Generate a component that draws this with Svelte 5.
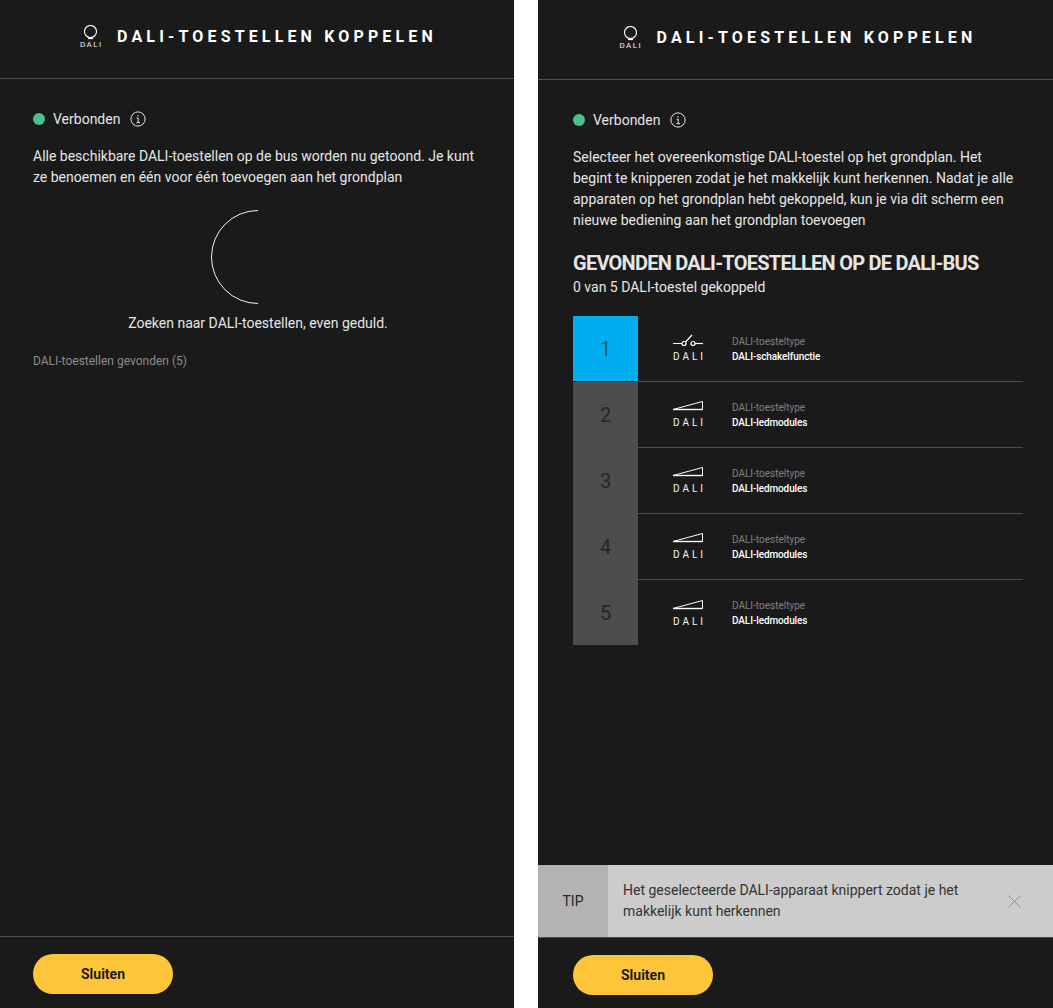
<script>
  const devices = [
    { nr: 1, type: "switch", name: "DALI-schakelfunctie" },
    { nr: 2, type: "led", name: "DALI-ledmodules" },
    { nr: 3, type: "led", name: "DALI-ledmodules" },
    { nr: 4, type: "led", name: "DALI-ledmodules" },
    { nr: 5, type: "led", name: "DALI-ledmodules" },
  ];
</script>

{#snippet header()}
  <header class="head">
    <span class="logo">
      <svg width="15" height="16" viewBox="0 0 15 16" fill="none" stroke="#fff">
        <circle cx="7.500" cy="6.500" r="6" stroke-width="1.100" />
        <path d="M5 13.500h5" stroke-width="1.200" />
      </svg>
      <span class="logo-text">DALI</span>
    </span>
    <h1>DALI-TOESTELLEN KOPPELEN</h1>
  </header>
{/snippet}

{#snippet status()}
  <div class="status">
    <span class="dot"></span>
    <span>Verbonden</span>
    <svg class="info" width="16" height="16" viewBox="0 0 16 16" fill="none" stroke="#e6e6e6">
      <circle cx="8" cy="8" r="7.100" stroke-width="1" />
      <path d="M6.600 7.100H8.200V11.600M6.400 11.600H10" stroke-width="1" />
      <path d="M7.400 4.200h1.200v1.300H7.400z" fill="#e6e6e6" stroke="none" />
    </svg>
  </div>
{/snippet}

<div class="page">
  <section class="panel">
    {@render header()}
    <div class="content">
      {@render status()}
      <p class="intro">Alle beschikbare DALI-toestellen op de bus worden nu getoond. Je kunt ze benoemen en één voor één toevoegen aan het grondplan</p>
      <div class="spinner">
        <svg width="94" height="94" viewBox="0 0 94 94" fill="none" stroke="#f2f2f2">
          <path d="M47 .5A46.500 46.500 0 0 0 47 93.500" stroke-width="1" />
        </svg>
        <div class="searching">Zoeken naar DALI-toestellen, even geduld.</div>
      </div>
      <div class="found-link">DALI-toestellen gevonden (5)</div>
    </div>
    <div class="rule"></div>
    <div class="foot">
      <button class="close">Sluiten</button>
    </div>
  </section>

  <section class="panel shifted">
    {@render header()}
    <div class="content">
      {@render status()}
      <p class="intro">Selecteer het overeenkomstige DALI-toestel op het grondplan. Het begint te knipperen zodat je het makkelijk kunt herkennen. Nadat je alle apparaten op het grondplan hebt gekoppeld, kun je via dit scherm een nieuwe bediening aan het grondplan toevoegen</p>
      <h2>GEVONDEN DALI-TOESTELLEN OP DE DALI-BUS</h2>
      <div class="count">0 van 5 DALI-toestel gekoppeld</div>
      <ul class="devices">
        {#each devices as d, i}
          <li class="device">
            <div class="nr" class:active={i === 0}>{d.nr}</div>
            <div class="row">
              <div class="icon">
                {#if d.type === "switch"}
                  <svg width="32" height="13" viewBox="0 0 32 13" fill="none" stroke="#fff" stroke-width="1.200">
                    <path d="M1 9.500H10M13.500 8L20 1" />
                    <circle cx="12" cy="9.500" r="2" fill="#1a1a1a" />
                    <circle cx="21" cy="9.500" r="2" />
                    <path d="M23 9.500H31" />
                  </svg>
                {:else}
                  <svg width="32" height="13" viewBox="0 0 32 13" fill="none" stroke="#fff">
                    <path d="M1 9.500L30.500 1.500V9.500Z" stroke-width="1" />
                    <path d="M1 9.500H30.500" stroke-width="1.400" />
                  </svg>
                {/if}
                <span class="icon-text">DALI</span>
              </div>
              <div class="labels">
                <div class="type">DALI-toesteltype</div>
                <div class="name">{d.name}</div>
              </div>
            </div>
          </li>
        {/each}
      </ul>
    </div>
    <div class="tip">
      <div class="tip-label">TIP</div>
      <div class="tip-text">Het geselecteerde DALI-apparaat knippert zodat je het makkelijk kunt herkennen</div>
      <svg class="tip-close" width="13" height="13" viewBox="0 0 13 13" stroke="#8c8c8c" stroke-width="1">
        <path d="M.5 .5L12.500 12.500M12.500 .5L.5 12.500" />
      </svg>
    </div>
    <div class="foot">
      <button class="close">Sluiten</button>
    </div>
  </section>
</div>

<style>
  :global(body) {
    background: #fff;
    font-family: Roboto, "Liberation Sans", sans-serif;
  }
  .page {
    display: flex;
    gap: 24px;
    height: 1008px;
  }
  .panel {
    width: 514px;
    background: #1a1a1a;
    color: #e6e6e6;
    display: flex;
    flex-direction: column;
  }
  .panel.shifted {
    width: 515px;
    padding-top: 1px;
  }
  .head {
    height: 73px;
    padding: 0 0 5px 2px;
    border-bottom: 1px solid #4d4d4d;
    display: flex;
    align-items: center;
    justify-content: center;
    gap: 15px;
  }
  .shifted .head {
    padding-left: 4px;
  }
  .logo {
    display: flex;
    flex-direction: column;
    align-items: center;
    width: 23px;
  }
  .logo svg {
    display: block;
  }
  .logo-text {
    font-size: 8px;
    line-height: 8px;
    letter-spacing: 1.500px;
    margin-right: -1.500px;
    color: #f2f2f2;
  }
  h1 {
    margin: 0;
    font-size: 16px;
    font-weight: 700;
    letter-spacing: 4.150px;
    color: #fff;
  }
  .content {
    flex: 1;
    padding: 30px 35px 0 33px;
  }
  .shifted .content {
    padding: 30px 30px 0 35px;
  }
  .status {
    display: flex;
    align-items: center;
    font-size: 14px;
    line-height: 20px;
    height: 20px;
  }
  .dot {
    width: 12px;
    height: 12px;
    border-radius: 50%;
    background: #4bc08f;
    margin-right: 8px;
  }
  .info {
    margin-left: 10px;
  }
  .intro {
    margin: 17px 0 0;
    font-size: 14px;
    line-height: 21px;
    color: #e6e6e6;
  }
  .spinner {
    margin-top: 22px;
    display: flex;
    flex-direction: column;
    align-items: center;
  }
  .spinner svg {
    display: block;
    margin-left: 3px;
  }
  .searching {
    margin-top: 9px;
    font-size: 14px;
    line-height: 20px;
    color: #e6e6e6;
    margin-left: 4px;
  }
  .found-link {
    margin-top: 18px;
    font-size: 12px;
    line-height: 20px;
    color: #8c8c8c;
  }
  h2 {
    margin: 19px 0 0;
    font-size: 20px;
    line-height: 26px;
    font-weight: 700;
    color: #e6e6e6;
    white-space: nowrap;
    letter-spacing: -0.750px;
  }
  .count {
    font-size: 14px;
    line-height: 20px;
    margin-top: 1px;
  }
  .devices {
    list-style: none;
    margin: 19px 0 0;
    padding: 0;
  }
  .device {
    display: flex;
    height: 66px;
  }
  .device:first-child .nr,
  .device:last-child .nr {
    height: 65px;
  }
  .nr {
    width: 65px;
    height: 66px;
    background: #4d4d4d;
    color: #262626;
    font-size: 20px;
    display: flex;
    align-items: center;
    justify-content: center;
  }
  .nr.active {
    background: #00aeef;
    color: #1f5f7a;
  }
  .row {
    flex: 1;
    display: flex;
    align-items: center;
    border-bottom: 1px solid #4d4d4d;
    box-sizing: border-box;
    height: 66px;
  }
  .device:last-child .row {
    border-bottom: none;
  }
  .icon {
    width: 32px;
    margin-left: 34px;
    display: flex;
    flex-direction: column;
    align-items: center;
  }
  .icon svg {
    display: block;
  }
  .icon-text {
    margin-top: 4px;
    font-size: 10px;
    line-height: 12px;
    letter-spacing: 3px;
    margin-right: -3px;
    color: #f2f2f2;
  }
  .labels {
    margin-left: 28px;
  }
  .type {
    font-size: 10px;
    line-height: 15px;
    color: #808080;
  }
  .name {
    font-size: 10px;
    line-height: 15px;
    font-weight: 500;
    letter-spacing: -0.100px;
    color: #fff;
  }
  .tip {
    height: 72px;
    background: #cccccc;
    border-bottom: 1px solid #4d4d4d;
    display: flex;
    align-items: center;
  }
  .tip-label {
    width: 70px;
    height: 100%;
    background: #b3b3b3;
    color: #262626;
    font-size: 14px;
    display: flex;
    align-items: center;
    justify-content: center;
  }
  .tip-text {
    margin-left: 15px;
    width: 360px;
    font-size: 14px;
    line-height: 21px;
    color: #333;
  }
  .tip-close {
    margin-left: 25px;
  }
  .rule {
    height: 1px;
    background: #4d4d4d;
  }
  .foot {
    height: 71px;
    padding: 17px 0 0 33px;
    box-sizing: border-box;
  }
  .shifted .foot {
    height: 70px;
    padding: 17px 0 0 35px;
  }
  .close {
    display: block;
    width: 140px;
    height: 40px;
    border: none;
    border-radius: 20px;
    background: #ffc538;
    color: #1a1a1a;
    font-family: inherit;
    font-size: 14px;
    font-weight: 700;
  }
</style>
